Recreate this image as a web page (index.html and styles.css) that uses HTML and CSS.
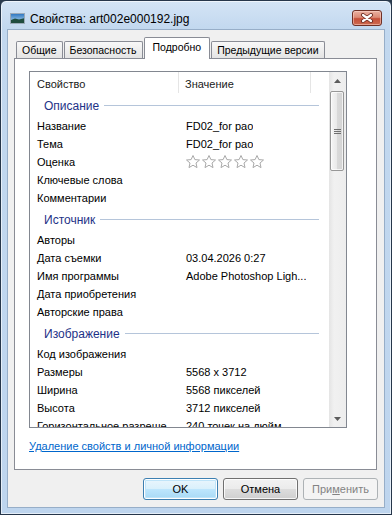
FILE: index.html
```html
<!DOCTYPE html>
<html>
<head>
    <meta charset="utf-8">
    <link rel="stylesheet" href="styles.css">
</head>
<body>
    <div class="window">
        <!-- Title bar -->
        <div class="titlebar">
            <svg class="title-icon" width="15" height="11" viewBox="0 0 15 11">
                <defs>
                    <linearGradient id="sky" x1="0" y1="0" x2="0" y2="1">
                        <stop offset="0" stop-color="#2a74c0"/>
                        <stop offset="1" stop-color="#bfe0f4"/>
                    </linearGradient>
                </defs>
                <rect x="0.5" y="0.5" width="14" height="10" fill="url(#sky)" stroke="#9aa9b8"/>
                <path d="M1 7 L5 5.6 L9 6.6 L14 5.2 L14 10 L1 10 Z" fill="#1f4c3e"/>
            </svg>
            <span class="title">Свойства: art002e000192.jpg</span>
            <div class="close-btn">
                <svg width="14" height="10" viewBox="0 0 14 10">
                    <path d="M3 2 L11 8 M11 2 L3 8" stroke="#6b2a20" stroke-width="4" stroke-linecap="round"/>
                    <path d="M3 2 L11 8 M11 2 L3 8" stroke="#fff" stroke-width="2.2" stroke-linecap="round"/>
                </svg>
            </div>
        </div>

        <div class="client">
            <!-- Tabs -->
            <div class="tabs">
                <div class="tab">Общие</div>
                <div class="tab">Безопасность</div>
                <div class="tab active">Подробно</div>
                <div class="tab">Предыдущие версии</div>
            </div>

            <div class="tab-panel">
                <div class="list">
                    <div class="list-main">
                        <div class="list-header">
                            <div class="col-head col-prop">Свойство</div>
                            <div class="col-head col-value">Значение</div>
                            <div class="col-head col-rest"></div>
                        </div>
                        <div class="list-body">
                            <div class="group"><span>Описание</span><i class="group-line"></i></div>
                            <div class="row"><span class="prop">Название</span><span class="value">FD02_for pao</span></div>
                            <div class="row"><span class="prop">Тема</span><span class="value">FD02_for pao</span></div>
                            <div class="row"><span class="prop">Оценка</span>
                                <span class="value">
                                    <svg class="stars" width="80" height="16" viewBox="0 0 80 16">
                                        <defs>
                                            <polygon id="star" points="8,1.5 9.9,5.6 14.5,6 11,9 12,13.6 8,11.2 4,13.6 5,9 1.5,6 6.1,5.6"
                                                     fill="#fff" stroke="#a9a9a9" stroke-width="1" stroke-linejoin="round"/>
                                        </defs>
                                        <use href="#star" x="0"/>
                                        <use href="#star" x="16"/>
                                        <use href="#star" x="32"/>
                                        <use href="#star" x="48"/>
                                        <use href="#star" x="64"/>
                                    </svg>
                                </span>
                            </div>
                            <div class="row"><span class="prop">Ключевые слова</span><span class="value"></span></div>
                            <div class="row"><span class="prop">Комментарии</span><span class="value"></span></div>

                            <div class="group"><span>Источник</span><i class="group-line"></i></div>
                            <div class="row"><span class="prop">Авторы</span><span class="value"></span></div>
                            <div class="row"><span class="prop">Дата съемки</span><span class="value">03.04.2026 0:27</span></div>
                            <div class="row"><span class="prop">Имя программы</span><span class="value">Adobe Photoshop Ligh...</span></div>
                            <div class="row"><span class="prop">Дата приобретения</span><span class="value"></span></div>
                            <div class="row"><span class="prop">Авторские права</span><span class="value"></span></div>

                            <div class="group"><span>Изображение</span><i class="group-line"></i></div>
                            <div class="row"><span class="prop">Код изображения</span><span class="value"></span></div>
                            <div class="row"><span class="prop">Размеры</span><span class="value">5568 x 3712</span></div>
                            <div class="row"><span class="prop">Ширина</span><span class="value">5568 пикселей</span></div>
                            <div class="row"><span class="prop">Высота</span><span class="value">3712 пикселей</span></div>
                            <div class="row"><span class="prop">Горизонтальное разреше...</span><span class="value">240 точек на дюйм</span></div>
                        </div>
                    </div>

                    <div class="scrollbar">
                        <div class="sb-btn">
                            <svg width="7" height="4" viewBox="0 0 7 4"><polygon points="0,4 3.5,0 7,4" fill="#5c5c5c"/></svg>
                        </div>
                        <div class="sb-track">
                            <div class="sb-thumb"><i class="sb-grip"></i></div>
                        </div>
                        <div class="sb-btn">
                            <svg width="7" height="4" viewBox="0 0 7 4"><polygon points="0,0 7,0 3.5,4" fill="#5c5c5c"/></svg>
                        </div>
                    </div>
                </div>

                <a class="link" href="#">Удаление свойств и личной информации</a>
            </div>

            <!-- Dialog buttons -->
            <div class="buttons">
                <button type="button" class="btn default">OK</button>
                <button type="button" class="btn">Отмена</button>
                <button type="button" class="btn" disabled>При<u>м</u>енить</button>
            </div>
        </div>
    </div>
</body>
</html>
```

FILE: styles.css
```css
* {
    box-sizing: border-box;
}

body {
    margin: 0;
    background: #2b3b4d;
    font-family: "Liberation Sans", Arial, sans-serif;
    font-size: 11px;
    color: #000;
}

.window {
    width: 392px;
    height: 515px;
    display: flex;
    flex-direction: column;
    border: 1px solid #26364a;
    border-radius: 6px 6px 0 0;
    background: linear-gradient(#d4e4f5, #c2d8ef 28px, #bed5ee);
    box-shadow: inset 0 0 0 1px rgba(255, 255, 255, 0.6);
}

/* Title bar */
.titlebar {
    height: 28px;
    flex: none;
    display: flex;
    align-items: flex-start;
    padding: 0 9px 0 9px;
}

.title-icon {
    margin-top: 12px;
    flex: none;
}

.title {
    margin: 11px 0 0 5px;
    font-size: 12px;
    line-height: 15px;
}

.close-btn {
    margin: 9px 0 0 auto;
    width: 30px;
    height: 16px;
    display: flex;
    align-items: center;
    justify-content: center;
    border: 1px solid #6e3026;
    border-radius: 3px;
    background: linear-gradient(#eab1a2 0%, #dc8b77 45%, #c5503a 55%, #cd6a4f 100%);
    box-shadow: inset 0 0 0 1px rgba(255, 220, 210, 0.5);
}

/* Client area */
.client {
    flex: 1;
    display: flex;
    flex-direction: column;
    margin: 0 6px 6px;
    padding: 7px 6px 7px 6px;
    border: 1px solid #97aec8;
    background: #f0f0f0;
}

.tabs {
    height: 21px;
    flex: none;
    display: flex;
    align-items: flex-end;
    padding-left: 2px;
    font-size: 10.5px;
}

.tab {
    height: 17px;
    padding: 0 5px;
    margin-right: 1px;
    display: flex;
    align-items: center;
    border: 1px solid #898c95;
    border-bottom: none;
    border-radius: 2px 2px 0 0;
    background: linear-gradient(#f8f8f8, #e4e4e4);
    white-space: nowrap;
}

.tab.active {
    position: relative;
    z-index: 1;
    height: 22px;
    margin-bottom: -1px;
    padding: 0 8px 3px;
    background: #fff;
}

.tab-panel {
    flex: 1;
    display: flex;
    flex-direction: column;
    margin-right: 1px;
    padding: 12px 0 0 14px;
    border: 1px solid #898c95;
    background: #fff;
}

/* List view */
.list {
    width: 318px;
    height: 357px;
    display: flex;
    border: 1px solid #828790;
}

.list-main {
    flex: 1;
    min-width: 0;
    display: flex;
    flex-direction: column;
}

.list-header {
    height: 21px;
    flex: none;
    display: flex;
}

.col-head {
    padding: 3px 0 0 6px;
    line-height: 18px;
    border-right: 1px solid #e5e5e5;
    color: #1a1a1a;
}

.col-prop {
    width: 149px;
    padding-left: 7px;
}

.col-value {
    width: 132px;
}

.col-rest {
    flex: 1;
    border-right: none;
}

.list-body {
    flex: 1;
    overflow: hidden;
}

.group {
    height: 24px;
    display: flex;
    align-items: flex-start;
    padding: 6px 10px 0 14px;
    font-size: 12px;
    line-height: 15px;
    color: #1e3287;
}

.group-line {
    flex: 1;
    height: 1px;
    margin: 6px 0 0 5px;
    background: #b5c5da;
}

.row {
    height: 18px;
    display: flex;
    line-height: 18px;
    white-space: nowrap;
}

.prop {
    width: 149px;
    flex: none;
    padding-left: 7px;
    overflow: hidden;
}

.value {
    padding-left: 7px;
    overflow: hidden;
}

.stars {
    display: block;
    margin: 1px 0 0 -1px;
}

/* Scrollbar */
.scrollbar {
    width: 17px;
    flex: none;
    display: flex;
    flex-direction: column;
    background: linear-gradient(to right, #e4e4e4, #f1f1f1 30%, #ededed);
}

.sb-btn {
    height: 17px;
    display: flex;
    align-items: center;
    justify-content: center;
}

.sb-track {
    flex: 1;
    padding: 2px 2px 0 1px;
}

.sb-thumb {
    height: 80px;
    display: flex;
    align-items: center;
    justify-content: center;
    border: 1px solid #979797;
    border-radius: 2px;
    background: linear-gradient(to right, #f6f6f6, #e9e9e9 50%, #dadada 50%, #d4d4d4);
    box-shadow: inset 0 0 0 1px rgba(255, 255, 255, 0.7);
}

.sb-grip {
    width: 7px;
    height: 5px;
    background: repeating-linear-gradient(to bottom, #6f6f6f 0 1px, transparent 1px 2px);
}

.link {
    align-self: flex-start;
    margin-top: 11px;
    line-height: 14px;
    color: #0066cc;
}

/* Buttons */
.buttons {
    height: 22px;
    flex: none;
    display: flex;
    justify-content: flex-end;
    gap: 5px;
    margin-top: 8px;
}

.btn {
    width: 75px;
    height: 22px;
    padding: 0;
    font-family: inherit;
    font-size: 11px;
    color: #000;
    border: 1px solid #707070;
    border-radius: 3px;
    background: linear-gradient(#f2f2f2 0%, #ebebeb 50%, #dddddd 50%, #cfcfcf 100%);
    box-shadow: inset 0 0 0 1px rgba(255, 255, 255, 0.8);
}

.btn.default {
    border-color: #3c7fb1;
    background: linear-gradient(#eaf6fd 0%, #d9f0fc 50%, #bee6fd 50%, #a7d9f5 100%);
    box-shadow: inset 0 0 0 1px #ffffff, inset 0 0 0 2px #bfe4f9;
}

.btn:disabled {
    border-color: #adb2b5;
    background: #f4f4f4;
    color: #838383;
    box-shadow: none;
}
```
